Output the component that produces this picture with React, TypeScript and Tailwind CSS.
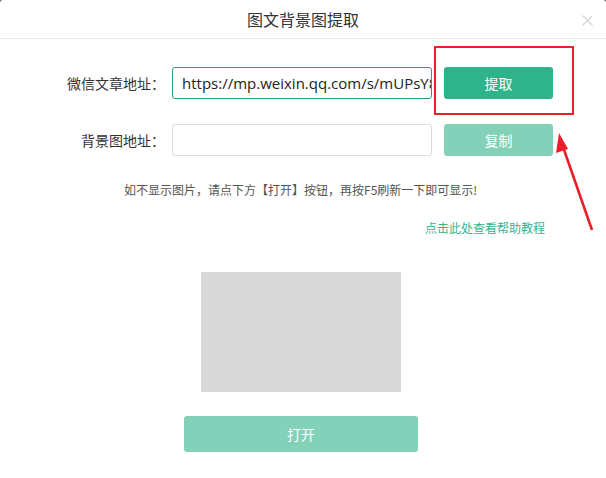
import React from "react";

export default function App() {
  const cjk = { fontFamily: '"Noto Sans CJK SC", "Noto Sans", sans-serif' };
  return (
    <div className="w-[606px] h-[478px] bg-[#555] overflow-hidden" style={cjk}>
      <div className="relative w-[606px] h-[478px] bg-white rounded-t-[3px]">
        {/* header */}
        <div className="relative h-[39px] border-b border-[#e8eeee] flex items-center justify-center">
          <span className="text-[16px] text-[#333] leading-none">图文背景图提取</span>
          <svg className="absolute right-[13px] top-[15px]" width="11" height="11" viewBox="0 0 11 11">
            <path d="M0.5 0.5 L10.5 10.5 M10.5 0.5 L0.5 10.5" stroke="#d4d4d4" strokeWidth="1.2" />
          </svg>
        </div>

        {/* body */}
        <div className="flex flex-col pt-[28px]">
          <div className="flex items-center h-[32px]">
            <label className="w-[165px] text-right text-[14px] text-[#333] whitespace-nowrap">微信文章地址：</label>
            <div className="ml-[7px] w-[260px] h-[32px] border border-[#2e9e78] rounded-[3px] flex items-center pl-[9px] overflow-hidden">
              <span
                className="text-[15px] text-[#222] whitespace-nowrap"
                style={{ fontFamily: '"Open Sans", "Noto Sans", sans-serif' }}
              >
                https://mp.weixin.qq.com/s/mUPsY8
              </span>
            </div>
            <button className="ml-[12px] w-[109px] h-[32px] rounded-[3px] bg-[#2fb38b] text-white text-[14px]">
              提取
            </button>
          </div>

          <div className="flex items-center h-[32px] mt-[25px]">
            <label className="w-[165px] text-right text-[14px] text-[#333] whitespace-nowrap">背景图地址：</label>
            <div className="ml-[7px] w-[260px] h-[32px] border border-[#dcdcdc] rounded-[3px]" />
            <button className="ml-[12px] w-[109px] h-[32px] rounded-[3px] bg-[#84d1b9] text-white text-[14px]">
              复制
            </button>
          </div>

          <p className="mt-[26px] ml-[124px] text-[12px] leading-[16px] text-[#555]">
            如不显示图片，请点下方【打开】按钮，再按F5刷新一下即可显示!
          </p>

          <a className="mt-[22px] self-start ml-[425px] text-[12px] leading-[16px] text-[#35b38f]">
            点击此处查看帮助教程
          </a>

          <div className="mt-[36px] ml-[201px] w-[200px] h-[120px] bg-[#d9d9d9]" />

          <button className="mt-[24px] ml-[184px] w-[234px] h-[36px] rounded-[3px] bg-[#84d1b9] text-white text-[14px]">
            打开
          </button>
        </div>

        {/* annotation overlay */}
        <div className="absolute left-[434px] top-[46px] w-[140px] h-[69px] border-2 border-[#e8202a]" />
        <svg className="absolute left-[540px] top-[120px]" width="66" height="120" viewBox="0 0 66 120">
          <line x1="52" y1="110" x2="22" y2="24" stroke="#e8202a" strokeWidth="2.6" />
          <polygon points="19,13 16,33 28,29" fill="#e8202a" />
        </svg>
      </div>
    </div>
  );
}
